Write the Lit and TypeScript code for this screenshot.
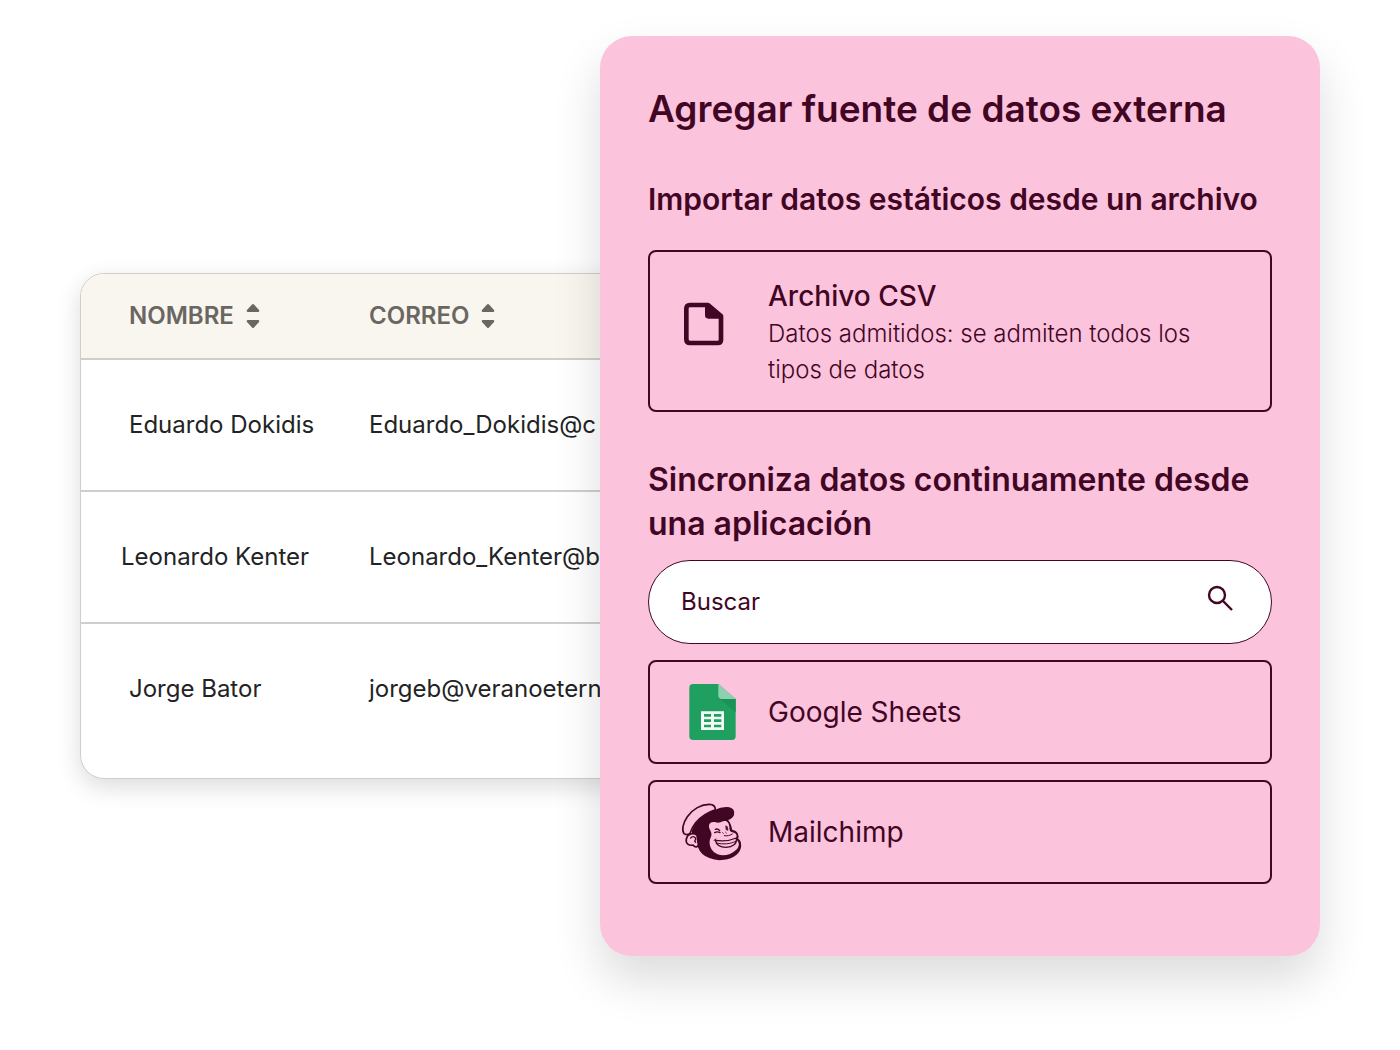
import { LitElement, html, css, svg } from "lit";
import { customElement, property } from "lit/decorators.js";

interface Contact {
  name: string;
  email: string;
  outdent?: boolean;
}

const CONTACTS: Contact[] = [
  { name: "Eduardo Dokidis", email: "Eduardo_Dokidis@c" },
  { name: "Leonardo Kenter", email: "Leonardo_Kenter@b", outdent: true },
  { name: "Jorge Bator", email: "jorgeb@veranoetern" },
];

const FILE_ICON = svg`
  <svg class="icon" viewBox="30 33 192 192" aria-hidden="true">
    <path d="M60 45H114L153 78V149Q153 159 143 159H60Q49 159 49 148V56Q49 45 60 45Z"
      fill="none" stroke="currentColor" stroke-width="14" stroke-linejoin="round"/>
    <path d="M105 42H116L157 76V86H115Q105 86 105 76Z" fill="currentColor"/>
  </svg>`;

const SHEETS_ICON = svg`
  <svg class="icon" viewBox="30 30 192 192" aria-hidden="true">
    <path d="M69 42H145L197 87V199Q197 210 186 210H69Q58 210 58 199V53Q58 42 69 42Z" fill="#1fa061"/>
    <path d="M150 87H197V127Z" fill="#1b9357"/>
    <path d="M145 42L197 87H156Q145 87 145 76Z" fill="#8ed1b1"/>
    <path fill="#f3fbf6" fill-rule="evenodd" d="M93 124H162V180H93ZM102 132V140H123V132ZM132 132V140H154V132ZM102 148V156H123V148ZM132 148V156H154V148ZM102 164V172H123V164ZM132 164V172H154V164Z"/>
  </svg>`;

const MAILCHIMP_ICON = svg`
  <svg class="icon" viewBox="30 30 192 192" aria-hidden="true">
    <g stroke="currentColor" stroke-width="5" stroke-linecap="round" stroke-linejoin="round">
      <path fill="currentColor" d="M68 124C76 96 102 72 134 62C158 51 186 49 190 65C192 79 183 86 169 89C182 97 181 112 185 122C203 125 206 138 201 146C216 156 214 178 198 192C178 208 145 213 119 202C103 196 91 184 86 170C78 158 78 140 68 130Z"/>
      <path fill="#fcc3dc" stroke="none" d="M119 118C113 103 121 93 137 97C146 100 151 97 159 94C171 90 177 99 178 111C178 120 180 126 187 127C201 130 203 139 196 147C210 155 210 170 197 181C184 194 160 200 143 193C128 187 117 171 119 154C120 144 126 139 124 130C123 125 121 122 119 118Z"/>
      <path fill="#fcc3dc" d="M42 131C35 121 38 100 52 80C68 57 94 43 118 43C130 43 136 49 136 59C112 67 90 82 77 98C67 110 63 122 60 130Q50 137 42 131Z"/>
      <path fill="#fcc3dc" d="M81 136C70 126 52 132 49 147C46 161 57 168 69 165C76 174 84 171 85 165Z"/>
      <path fill="none" stroke-width="4" d="M62 144C68 137 78 140 77 148L74 153L77 157"/>
      <path fill="none" stroke-width="4" d="M136 118C141 116 146 118 149 122M134 128C139 125 145 125 150 128"/>
      <path fill="currentColor" stroke-width="2" d="M168 108L172 110L174 121L169 119Z"/>
      <path fill="none" stroke-width="3" d="M158 128L160 130M167 127L169 129M163 137C172 139 180 136 187 132"/>
      <path fill="#fcc3dc" stroke-width="4" d="M136 151C158 154 179 153 199 144C202 162 188 171 168 172C152 172 139 165 136 151Z"/>
      <path fill="none" stroke-width="3" d="M140 159C159 164 182 162 197 154M132 151L138 147"/>
    </g>
  </svg>`;

const SEARCH_ICON = svg`
  <svg class="search-icon" viewBox="0 0 32 32" aria-hidden="true">
    <g fill="none" stroke="currentColor" stroke-width="2.4">
      <circle cx="10" cy="9" r="8"/>
      <path d="M15.500 14.500L25 24"/>
    </g>
  </svg>`;

const SORT_ICON = svg`
  <svg class="sort-icon" viewBox="0 0 14 24" aria-hidden="true">
    <path d="M6 .6Q7 -.4 8 .6L13 6Q14 8 12 8H2Q0 8 1 6ZM6 23.400Q7 24.400 8 23.400L13 18Q14 16 12 16H2Q0 16 1 18Z" fill="currentColor"/>
  </svg>`;

@customElement("contacts-table")
export class ContactsTable extends LitElement {
  @property({ attribute: false }) contacts: Contact[] = [];

  static styles = css`
    :host {
      display: block;
      overflow: hidden;
      border: 1px solid #cfcecb;
      border-radius: 24px;
      background: #fff;
      box-shadow: 0 8px 24px rgba(0, 0, 0, 0.14);
      color: #222324;
      font-size: 24px;
      line-height: 32px;
    }
    .table {
      width: 100%;
      border-collapse: separate;
      border-spacing: 0;
      table-layout: fixed;
    }
    .name-col {
      width: 240px;
    }
    .head {
      height: 84px;
      padding: 0 0 0 48px;
      border-bottom: 2px solid #cfcecb;
      background: #f8f6ef;
      color: #6a6763;
      text-align: left;
      font-weight: 600;
    }
    .sort {
      display: flex;
      align-items: center;
      gap: 12px;
      padding: 0;
      border: 0;
      background: none;
      color: inherit;
      font: inherit;
      cursor: pointer;
    }
    .sort-icon {
      width: 14px;
      height: 24px;
    }
    .cell {
      height: 130px;
      padding: 0 0 0 48px;
      border-bottom: 2px solid #cfcecb;
      white-space: nowrap;
    }
    .outdent {
      padding-left: 40px;
    }
    .row:last-child .cell {
      padding-bottom: 24px;
      border-bottom: 0;
    }
  `;

  render() {
    return html`
      <table class="table">
        <colgroup>
          <col class="name-col" />
          <col />
        </colgroup>
        <thead>
          <tr>
            <th class="head" scope="col">
              <button class="sort" type="button">NOMBRE ${SORT_ICON}</button>
            </th>
            <th class="head" scope="col">
              <button class="sort" type="button">CORREO ${SORT_ICON}</button>
            </th>
          </tr>
        </thead>
        <tbody>
          ${this.contacts.map(
            (c) => html`
              <tr class="row">
                <td class="cell ${c.outdent ? "outdent" : ""}">${c.name}</td>
                <td class="cell">${c.email}</td>
              </tr>
            `
          )}
        </tbody>
      </table>
    `;
  }
}

@customElement("source-panel")
export class SourcePanel extends LitElement {
  static styles = css`
    :host {
      display: block;
      box-sizing: border-box;
      padding: 48px 48px 72px;
      border-radius: 32px;
      background: #fcc3dc;
      box-shadow: 0 24px 48px rgba(0, 0, 0, 0.14);
      color: #420625;
    }
    .title {
      margin: 0 0 46px;
      font-size: 37px;
      line-height: 50px;
      font-weight: 600;
    }
    .subtitle {
      margin: 0 0 32px;
      font-size: 30px;
      line-height: 38px;
      font-weight: 600;
    }
    .subtitle.sync {
      margin: 46px 0 14px;
      font-size: 32px;
      line-height: 44px;
    }
    .sources {
      display: flex;
      flex-direction: column;
      gap: 16px;
    }
    .source {
      display: flex;
      box-sizing: border-box;
      width: 100%;
      min-height: 104px;
      align-items: center;
      gap: 24px;
      padding: 18px 30px;
      border: 2px solid currentColor;
      border-radius: 8px;
      background: none;
      color: inherit;
      font-family: inherit;
      font-size: 28px;
      line-height: 36px;
      text-align: left;
      cursor: pointer;
    }
    .source.file {
      padding: 26px 30px 22px;
    }
    .copy {
      display: flex;
      flex-direction: column;
      gap: 2px;
    }
    .name {
      font-weight: 500;
    }
    .detail {
      font-size: 24px;
      font-weight: 300;
    }
    .icon {
      flex: none;
      width: 64px;
      height: 64px;
    }
    .search {
      display: flex;
      box-sizing: border-box;
      height: 84px;
      align-items: center;
      padding: 0 32px;
      border: 1px solid currentColor;
      border-radius: 42px;
      background: #fff;
    }
    .field {
      flex: 1;
      min-width: 0;
      padding: 0;
      border: 0;
      outline: 0;
      background: none;
      color: inherit;
      font-family: inherit;
      font-size: 24px;
      line-height: 32px;
    }
    .field::placeholder {
      color: inherit;
      opacity: 1;
    }
    .search-icon {
      width: 32px;
      height: 32px;
      overflow: visible;
    }
  `;

  render() {
    return html`
      <h1 class="title">Agregar fuente de datos externa</h1>
      <h2 class="subtitle">Importar datos estáticos desde un archivo</h2>
      <button class="source file" type="button">
        ${FILE_ICON}
        <span class="copy">
          <span class="name">Archivo CSV</span>
          <span class="detail">Datos admitidos: se admiten todos los tipos de datos</span>
        </span>
      </button>
      <h2 class="subtitle sync">Sincroniza datos continuamente desde una aplicación</h2>
      <div class="sources">
        <label class="search">
          <input class="field" type="text" placeholder="Buscar" aria-label="Buscar" />
          ${SEARCH_ICON}
        </label>
        <button class="source" type="button">${SHEETS_ICON}<span>Google Sheets</span></button>
        <button class="source" type="button">${MAILCHIMP_ICON}<span>Mailchimp</span></button>
      </div>
    `;
  }
}

@customElement("app-root")
export class AppRoot extends LitElement {
  static styles = css`
    :host {
      display: grid;
      box-sizing: border-box;
      min-height: 100vh;
      grid-template-columns: 13fr 18fr;
      align-items: start;
      padding: 36px 80px;
      overflow: hidden;
      background: #fff;
      font-family: Inter, "Open Sans", sans-serif;
    }
    .contacts {
      grid-column: 1 / 3;
      grid-row: 1;
      margin-top: 237px;
      margin-right: 80px;
    }
    .panel {
      z-index: 1;
      grid-column: 2;
      grid-row: 1;
    }
  `;

  render() {
    return html`
      <contacts-table class="contacts" .contacts=${CONTACTS}></contacts-table>
      <source-panel class="panel"></source-panel>
    `;
  }
}
